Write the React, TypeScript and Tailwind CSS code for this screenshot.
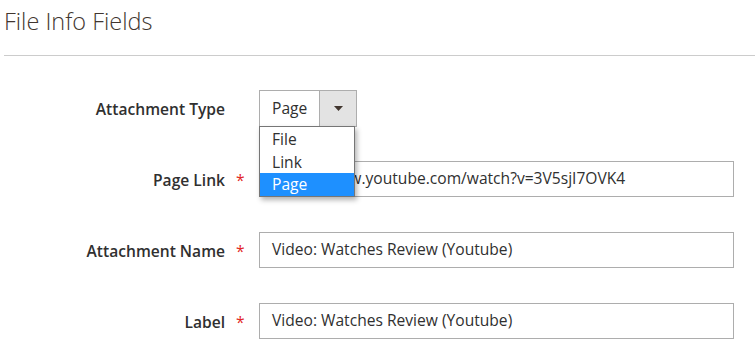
const font = { fontFamily: '"Open Sans", "Liberation Sans", sans-serif' };

type Field = { label: string; value: string; required: boolean };

const fields: Field[] = [
  { label: "Page Link", value: "https://www.youtube.com/watch?v=3V5sjI7OVK4", required: true },
  { label: "Attachment Name", value: "Video: Watches Review (Youtube)", required: true },
  { label: "Label", value: "Video: Watches Review (Youtube)", required: true },
];

function FieldLabel({ text, required }: { text: string; required?: boolean }) {
  return (
    <div className="flex w-[259px] shrink-0 items-center pt-[3px]">
      <span className="w-[225px] text-right text-[15.6px] font-semibold text-[#303030]">{text}</span>
      {required && <span className="ml-[11px] text-[15.6px] text-[#e22626]">*</span>}
    </div>
  );
}

export default function App() {
  return (
    <div className="h-[353px] w-[755px] overflow-hidden bg-white" style={font}>
      <div className="pl-[4px]">
        <h2 className="pt-[5px] text-[23.5px] leading-[32px] font-light text-[#41362f]">File Info Fields</h2>
        <div className="mt-[18px] h-px bg-[#cccccc]" />
      </div>

      <div className="mt-[34px] flex flex-col gap-[35px]">
        <div className="relative z-10 flex h-[36px] items-center">
          <FieldLabel text="Attachment Type" />
          <div className="relative">
            <div className="flex h-[37px] w-[98px] border border-[#adadad] bg-white">
              <span className="flex flex-1 items-center pt-[2px] pl-[12px] text-[15.6px] text-[#303030]">Page</span>
              <span className="flex w-[37px] items-center justify-center border-l border-[#adadad] bg-[#e3e3e3]">
                <svg width="9" height="5" viewBox="0 0 9 5">
                  <path d="M0 0h9L4.5 5z" fill="#41362f" />
                </svg>
              </span>
            </div>
            <ul className="absolute top-[36px] left-0 w-[96px] border border-[#767676] bg-white py-0 text-[15.6px] text-[#303030] shadow-[2px_3px_5px_rgba(0,0,0,0.3)]">
              <li className="h-[23px] pl-[12px] leading-[25px]">File</li>
              <li className="h-[23px] pl-[12px] leading-[24px]">Link</li>
              <li className="h-[23px] bg-[#1e90ff] pl-[12px] leading-[23px] text-white">Page</li>
            </ul>
          </div>
        </div>

        {fields.map((f) => (
          <div key={f.label} className="flex h-[36px] items-center">
            <FieldLabel text={f.label} required={f.required} />
            <div className="flex h-[36px] w-[475px] items-center border border-[#adadad] bg-white pl-[12px] text-[15.6px] whitespace-nowrap text-[#303030]">
              {f.value}
            </div>
          </div>
        ))}
      </div>
    </div>
  );
}
